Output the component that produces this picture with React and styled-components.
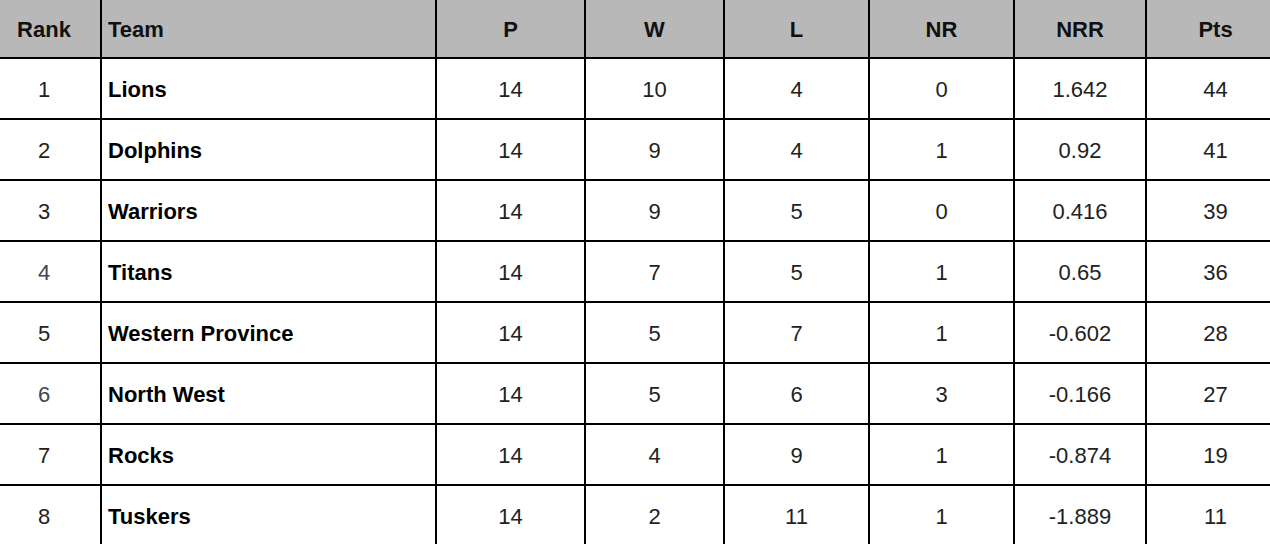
import React from "react";
import styled, { createGlobalStyle } from "styled-components";

const Global = createGlobalStyle`
  html, body { margin: 0; padding: 0; background: #ffffff; }
  body { font-family: "Liberation Sans", Arial, sans-serif; overflow: hidden; }
`;

const COLS = "114px 335px 149px 139px 145px 145px 132px 139px";

const Table = styled.div`
  width: 1298px;
  margin-left: -12px;
  display: grid;
  grid-template-columns: ${COLS};
  grid-auto-rows: 61px;
  grid-template-rows: 59px;
`;

const Cell = styled.div`
  box-sizing: border-box;
  display: flex;
  align-items: center;
  justify-content: ${(p) => (p.$left ? "flex-start" : "center")};
  padding-left: ${(p) => (p.$left ? "6px" : "0")};
  padding-top: 2px;
  border-right: 2px solid #000;
  border-bottom: 2px solid #000;
  font-size: 22px;
  line-height: 1;
  white-space: nowrap;
`;

const HeadCell = styled(Cell)`
  background: #b8b8b8;
  font-weight: bold;
  color: #111;
`;

const BodyCell = styled(Cell)`
  background: #ffffff;
  font-weight: ${(p) => (p.$bold ? "bold" : "normal")};
  color: ${(p) => (p.$bold ? "#000" : p.$muted ? "#45454f" : "#222")};
`;

const headers = ["Rank", "Team", "P", "W", "L", "NR", "NRR", "Pts"];

const rows = [
  [1, "Lions", 14, 10, 4, 0, "1.642", 44],
  [2, "Dolphins", 14, 9, 4, 1, "0.92", 41],
  [3, "Warriors", 14, 9, 5, 0, "0.416", 39],
  [4, "Titans", 14, 7, 5, 1, "0.65", 36],
  [5, "Western Province", 14, 5, 7, 1, "-0.602", 28],
  [6, "North West", 14, 5, 6, 3, "-0.166", 27],
  [7, "Rocks", 14, 4, 9, 1, "-0.874", 19],
  [8, "Tuskers", 14, 2, 11, 1, "-1.889", 11],
];

export default function App() {
  return (
    <>
      <Global />
      <Table>
        {headers.map((h, i) => (
          <HeadCell key={h} $left={i === 1}>
            {h}
          </HeadCell>
        ))}
        {rows.map((r) =>
          r.map((v, i) => (
            <BodyCell
              key={`${r[0]}-${i}`}
              $left={i === 1}
              $bold={i === 1}
              $muted={i === 0 && (r[0] === 4 || r[0] === 6)}
            >
              {v}
            </BodyCell>
          ))
        )}
      </Table>
    </>
  );
}
